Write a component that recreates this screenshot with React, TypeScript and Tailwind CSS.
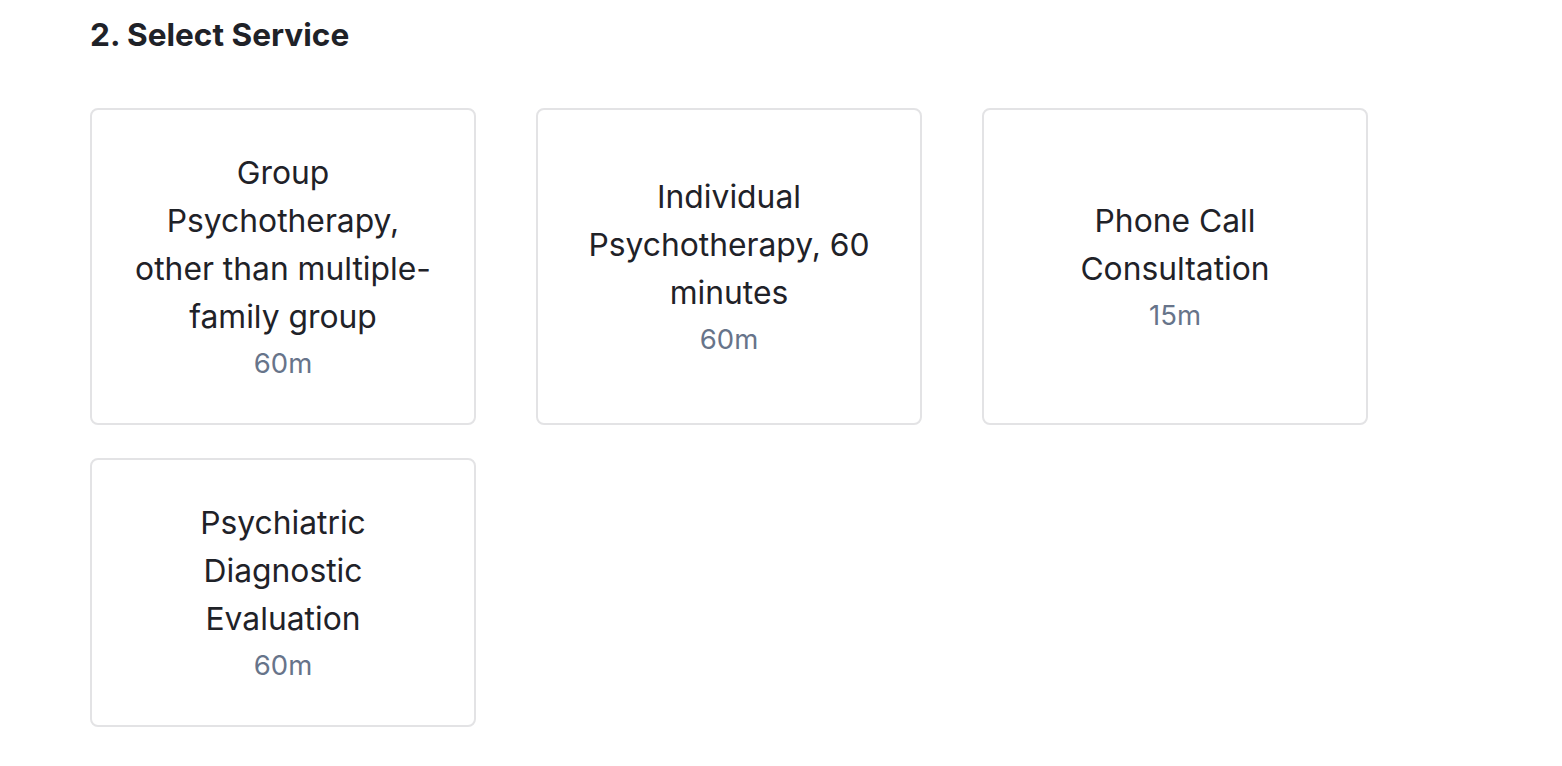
const services = [
  { name: 'Group Psychotherapy, other than multiple-family group', duration: '60m' },
  { name: 'Individual Psychotherapy, 60 minutes', duration: '60m' },
  { name: 'Phone Call Consultation', duration: '15m' },
  { name: 'Psychiatric Diagnostic Evaluation', duration: '60m' },
]

function ServiceCard({ name, duration }: { name: string; duration: string }) {
  return (
    <button className="flex flex-col items-center justify-center rounded-[8px] border-2 border-[#e3e3e5] bg-white px-[40px] py-[38.5px] text-center">
      <span className="text-[31.8px] leading-[48px] text-[#1f2228]">{name}</span>
      <span className="text-[27.5px] leading-[44px] text-[#67748a]">{duration}</span>
    </button>
  )
}

export default function App() {
  return (
    <div className="min-h-screen bg-white pl-[90px] pt-[11px] font-['Inter',sans-serif]">
      <h2 className="mb-[49px] text-[31.6px] font-bold leading-[48px] text-[#1f2228]">2. Select Service</h2>
      <div className="grid grid-cols-[repeat(3,386px)] gap-x-[60px] gap-y-[33px]">
        {services.map((s) => (
          <ServiceCard key={s.name} name={s.name} duration={s.duration} />
        ))}
      </div>
    </div>
  )
}
